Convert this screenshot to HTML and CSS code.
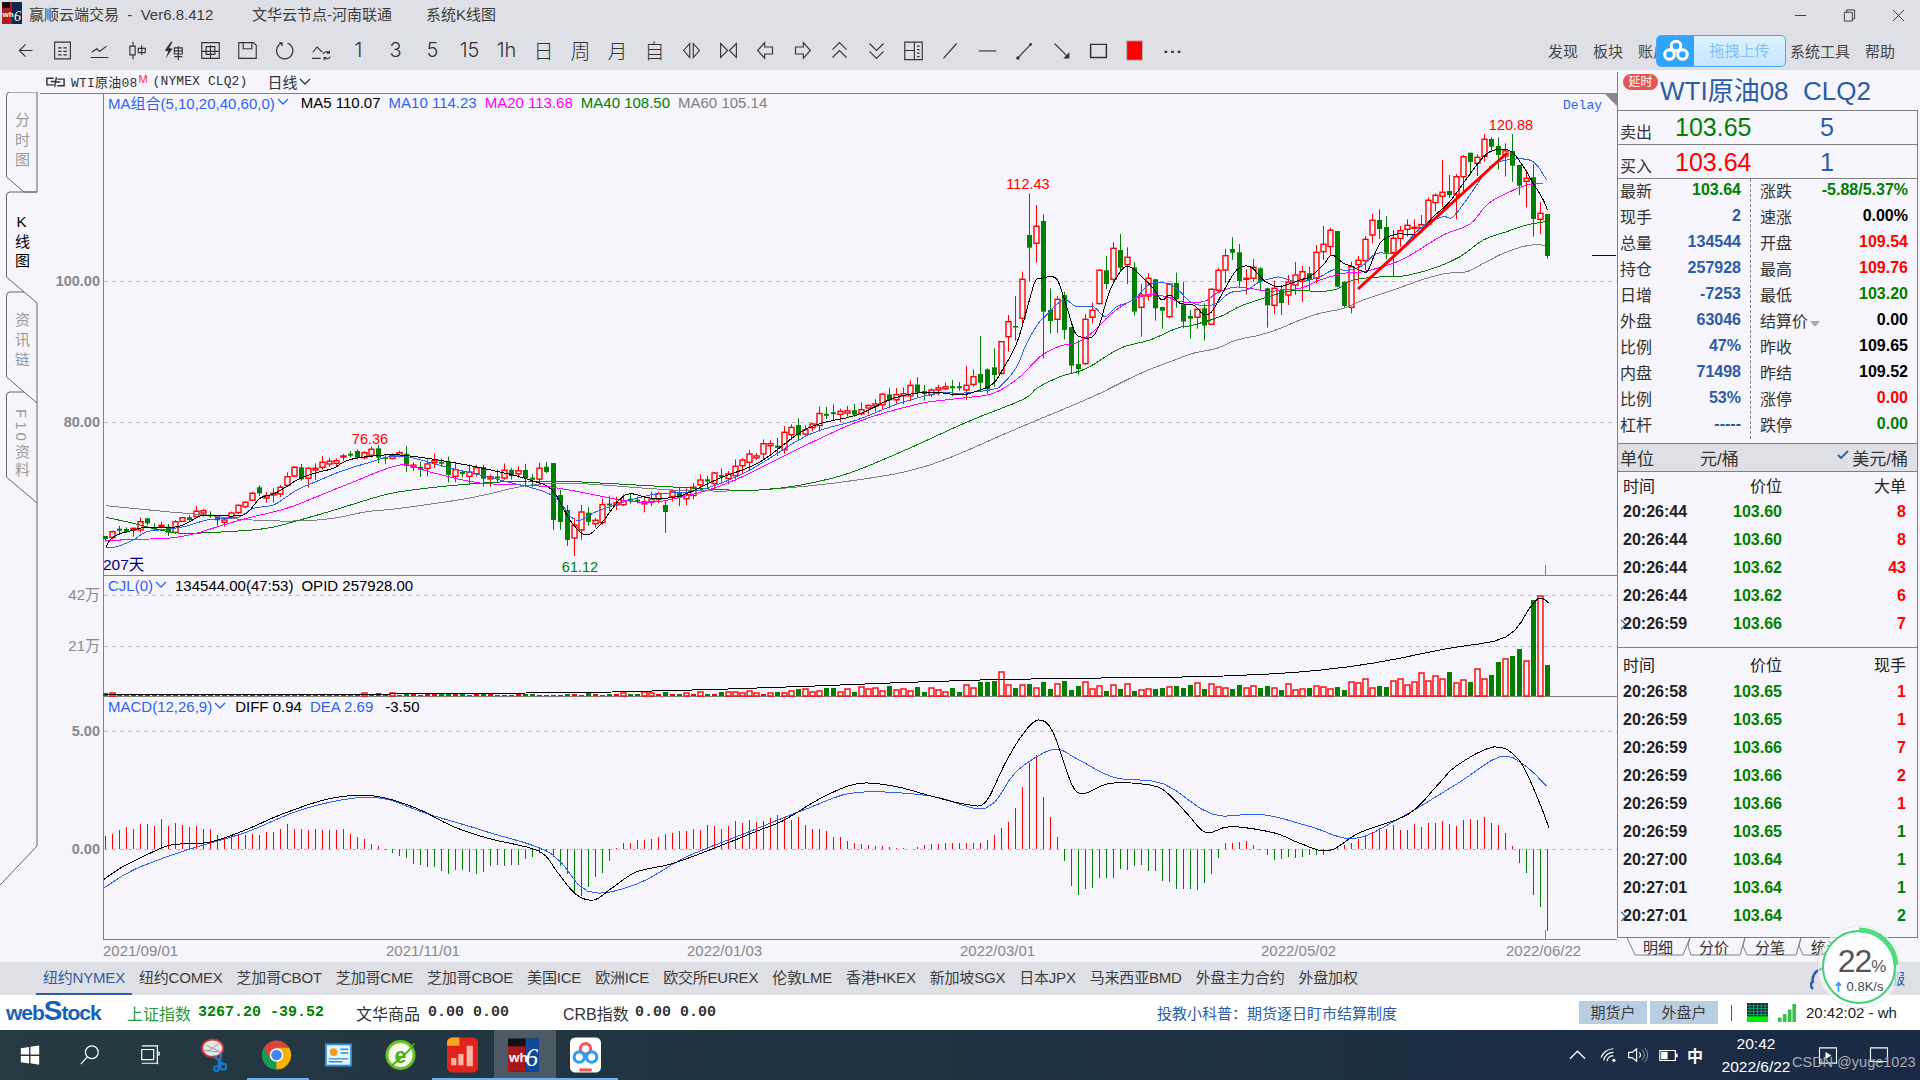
FILE: index.html
```html
<!DOCTYPE html>
<html lang="zh">
<head>
<meta charset="utf-8">
<title>赢顺云端交易</title>
<link rel="stylesheet" href="styles.css">
</head>
<body>
<div class="app">
  <header class="titlebar">
    <svg class="applogo" viewBox="0 0 20 22">
      <rect width="10" height="22" fill="#b01c1c"/><rect x="10" width="10" height="22" fill="#14284e"/><rect width="8" height="6" fill="#111"/>
      <text x="0.5" y="15" class="applogo-t">wh</text><text x="12" y="19" class="applogo-six">6</text>
    </svg>
    <span class="t-a">赢顺云端交易&nbsp; -&nbsp; Ver6.8.412</span>
    <span class="t-b">文华云节点-河南联通</span>
    <span class="t-c">系统K线图</span>
    <div class="winctl">
      <svg viewBox="0 0 14 14"><path d="M1 7h12"/></svg>
      <svg viewBox="0 0 14 14"><path d="M1.5 3.5h8.500v9.500h-8.500zM4 3.500V1h8.500v9.500H10"/></svg>
      <svg viewBox="0 0 14 14"><path d="M1 1l12 12M13 1L1 13"/></svg>
    </div>
  </header>

  <nav class="toolbar">
    <span class="tb"><svg viewBox="0 0 24 24"><path d="M20 12H5M12 5l-7 7 7 7"/></svg></span>
    <span class="tb"><svg viewBox="0 0 24 24"><path d="M3 2.500h18v19H3zM7 9h4M13 9h4M7 13h4M13 13h4M7 17h4M13 17h4"/></svg></span>
    <span class="tb"><svg viewBox="0 0 24 24"><path d="M2 20h20M3 14l6-4 3 3 8-6"/></svg></span>
    <span class="tb"><svg viewBox="0 0 24 24"><path d="M8 2v5M8 17v5M4.500 7h6v10h-6zM18 6v11M14 9.500h8v5h-8z"/></svg></span>
    <span class="tb"><svg viewBox="0 0 24 24"><path class="solid" d="M9 2L2 12l4 1-3 8 8-11-4-1 4-7z"/><path d="M13 9h9v7h-9zM13 12.500h9M17.500 7v16M13 19h9"/></svg></span>
    <span class="tb"><svg viewBox="0 0 24 24"><path d="M2 3h20v18H2zM2 13h20M12 6v15M7 7.500h10v9H7z"/></svg></span>
    <span class="tb"><svg viewBox="0 0 24 24"><path d="M2 3h17l3 3v15H2zM7 3v7h10V3M6 21v-1"/></svg></span>
    <span class="tb"><svg viewBox="0 0 24 24"><path d="M9 3.500a9.300 9.300 0 1 0 6.500 0M6 3l3.500.500-.500 3.500"/></svg></span>
    <span class="tb"><svg viewBox="0 0 24 24"><path d="M1 21h10M2 14l5-6 6 6M14 16a4 4 0 0 1 7-1M22 19a4 4 0 0 1-7 1M21 12v3h-3M15 23v-3h3"/></svg></span>
    <span class="tb tb-t">1</span>
    <span class="tb tb-t">3</span>
    <span class="tb tb-t">5</span>
    <span class="tb tb-t">15</span>
    <span class="tb tb-t">1h</span>
    <span class="tb tb-t">日</span>
    <span class="tb tb-t">周</span>
    <span class="tb tb-t">月</span>
    <span class="tb tb-t">自</span>
    <span class="tb"><svg viewBox="0 0 24 24"><path d="M10 4L3 12l7 8zM14 4l7 8-7 8z"/></svg></span>
    <span class="tb"><svg viewBox="0 0 24 24"><path d="M3 4l8 8-8 8zM21 4l-8 8 8 8z"/></svg></span>
    <span class="tb"><svg viewBox="0 0 24 24"><path d="M11 3l-8 9 8 9v-5h9V8h-9z"/></svg></span>
    <span class="tb"><svg viewBox="0 0 24 24"><path d="M13 3l8 9-8 9v-5H4V8h9z"/></svg></span>
    <span class="tb"><svg viewBox="0 0 24 24"><path d="M4 11l8-8 8 8M4 20l8-8 8 8"/></svg></span>
    <span class="tb"><svg viewBox="0 0 24 24"><path d="M4 4l8 8 8-8M4 13l8 8 8-8"/></svg></span>
    <span class="tb"><svg viewBox="0 0 24 24"><path d="M2 2.500h20v20H2zM13 2.500v20M2 12h11M16 7h3M16 11h3M16 15h3M16 19h3"/></svg></span>
    <span class="tb"><svg viewBox="0 0 24 24"><path d="M4 21L19 4"/></svg></span>
    <span class="tb"><svg viewBox="0 0 24 24"><path d="M2 12.500h20"/></svg></span>
    <span class="tb"><svg viewBox="0 0 24 24"><path d="M4 21L19 5"/><circle class="solid" cx="4.500" cy="20.500" r="2"/><circle class="solid" cx="19" cy="5" r="1.500"/></svg></span>
    <span class="tb"><svg viewBox="0 0 24 24"><path d="M4 4l15 15"/><path class="solid" d="M21 14v7h-7z"/></svg></span>
    <span class="tb"><svg viewBox="0 0 24 24"><path class="thick" d="M3 5h18v15H3z"/></svg></span>
    <span class="tb"><svg viewBox="0 0 24 24"><rect class="redbox" x="2" y="1" width="18" height="22"/></svg></span>
    <span class="tb"><svg viewBox="0 0 24 24"><path class="dots" d="M3 13.500h3M10.500 13.500h3M18 13.500h3"/></svg></span>
    <div class="tbmenu">
      <span>发现</span><span>板块</span><span>账户</span><span class="tbsys">系统工具</span><span>帮助</span>
    </div>
    <div class="uploader">
      <span class="up-ic"><svg viewBox="0 0 28 24"><circle cx="14" cy="7" r="4.800"/><circle cx="7.500" cy="15.500" r="4.800"/><circle cx="20.500" cy="15.500" r="4.800"/></svg></span>
      <span class="up-t">拖拽上传</span>
    </div>
  </nav>

  <main class="workspace">
    <section class="leftcol">
      <div class="subhead">
        <svg class="linkic" viewBox="0 0 22 12"><path d="M9 2H2v7h7M13 3h7v7h-7M6 5.500h5M11 6h5M12 1L10 11"/></svg>
        <span class="sym">WTI原油08</span><sup class="sym-m">M</sup><span class="sym sym2">(NYMEX CLQ2)</span>
        <span class="period">日线</span>
        <svg class="chev chev-d" viewBox="0 0 12 8"><path d="M1 1l5 5 5-5"/></svg>
      </div>
      <div class="chartrow">
        <div class="sidetabs">
          <svg class="sideoutline" viewBox="0 92 40 800">
            <path d="M24 192H37V92H10Q6.500 92 6.500 96V177L24 192"/>
            <path d="M37 192H10Q6.500 192 6.500 196V277L37 303"/>
            <path d="M24 292H10Q6.500 292 6.500 296V377L37 403"/>
            <path d="M24 392H10Q6.500 392 6.500 396V477L37 503"/>
            <path d="M37 303V846L0 885"/>
          </svg>
          <div class="stab">分时图</div>
          <div class="stab stab-on">K线图</div>
          <div class="stab">资讯链</div>
          <div class="stab stab-f10">F10资料</div>
        </div>
        <div class="charts">
          <svg id="chart" class="chart" viewBox="40 93 1577 869"></svg>
          <div class="legend lg1">
            <span class="c-blue">MA组合(5,10,20,40,60,0)</span><svg class="chev chev-b" viewBox="0 0 12 8"><path d="M1 1l5 5 5-5"/></svg>
            <span class="c-blk lgm">MA5 110.07</span><span class="c-blue">MA10 114.23</span><span class="c-mag">MA20 113.68</span><span class="c-grn">MA40 108.50</span><span class="c-gry">MA60 105.14</span>
          </div>
          <div class="legend lg2">
            <span class="c-blue">CJL(0)</span><svg class="chev chev-b" viewBox="0 0 12 8"><path d="M1 1l5 5 5-5"/></svg>
            <span class="c-blk lgm">134544.00(47:53)</span><span class="c-blk">OPID 257928.00</span>
          </div>
          <div class="legend lg3">
            <span class="c-blue">MACD(12,26,9)</span><svg class="chev chev-b" viewBox="0 0 12 8"><path d="M1 1l5 5 5-5"/></svg>
            <span class="c-blk lgm">DIFF 0.94</span><span class="c-blue">DEA 2.69</span><span class="c-blk lg-l">-3.50</span>
          </div>
          <span class="delay">Delay</span>
          <span class="corner"></span>
        </div>
      </div>
    </section>

    <aside class="panel">
      <div class="p-head"><span class="badge">延时</span><span class="p-title">WTI原油08&nbsp; CLQ2</span></div>
      <div class="p-bid"><span class="lab">卖出</span><span class="big c-grn">103.65</span><span class="big c-pb">5</span></div>
      <div class="p-bid"><span class="lab">买入</span><span class="big c-red">103.64</span><span class="big c-pb">1</span></div>
      <div class="quote">
        <div class="qcol qcol-l">
          <div class="qr"><span>最新</span><b class="c-grn">103.64</b></div>
          <div class="qr"><span>现手</span><b class="c-pb">2</b></div>
          <div class="qr"><span>总量</span><b class="c-pb">134544</b></div>
          <div class="qr"><span>持仓</span><b class="c-pb">257928</b></div>
          <div class="qr"><span>日增</span><b class="c-pb">-7253</b></div>
          <div class="qr"><span>外盘</span><b class="c-pb">63046</b></div>
          <div class="qr"><span>比例</span><b class="c-pb">47%</b></div>
          <div class="qr"><span>内盘</span><b class="c-pb">71498</b></div>
          <div class="qr"><span>比例</span><b class="c-pb">53%</b></div>
          <div class="qr"><span>杠杆</span><b class="c-pb">-----</b></div>
        </div>
        <div class="qcol qcol-r">
          <div class="qr"><span>涨跌</span><b class="c-grn">-5.88/5.37%</b></div>
          <div class="qr"><span>速涨</span><b class="c-blk">0.00%</b></div>
          <div class="qr"><span>开盘</span><b class="c-red">109.54</b></div>
          <div class="qr"><span>最高</span><b class="c-red">109.76</b></div>
          <div class="qr"><span>最低</span><b class="c-grn">103.20</b></div>
          <div class="qr"><span>结算价<i class="tri"></i></span><b class="c-blk">0.00</b></div>
          <div class="qr"><span>昨收</span><b class="c-blk">109.65</b></div>
          <div class="qr"><span>昨结</span><b class="c-blk">109.52</b></div>
          <div class="qr"><span>涨停</span><b class="c-red">0.00</b></div>
          <div class="qr"><span>跌停</span><b class="c-grn">0.00</b></div>
        </div>
      </div>
      <div class="unit"><span>单位</span><span class="unit-a">元/桶</span><svg class="chk" viewBox="0 0 12 10"><path d="M1 5l3 3 7-7"/></svg><span>美元/桶</span></div>
      <div class="tlist tl1">
        <div class="tr th"><span>时间</span><span>价位</span><span>大单</span></div>
        <div class="tr"><b>20:26:44</b><b class="c-grn">103.60</b><b class="c-red">8</b></div>
        <div class="tr"><b>20:26:44</b><b class="c-grn">103.60</b><b class="c-red">8</b></div>
        <div class="tr"><b>20:26:44</b><b class="c-grn">103.62</b><b class="c-red">43</b></div>
        <div class="tr"><b>20:26:44</b><b class="c-grn">103.62</b><b class="c-red">6</b></div>
        <div class="tr tr-cur"><b>20:26:59</b><b class="c-grn">103.66</b><b class="c-red">7</b></div>
      </div>
      <div class="tlist tl2">
        <div class="tr th"><span>时间</span><span>价位</span><span>现手</span></div>
        <div class="tr"><b>20:26:58</b><b class="c-grn">103.65</b><b class="c-red">1</b></div>
        <div class="tr"><b>20:26:59</b><b class="c-grn">103.65</b><b class="c-red">1</b></div>
        <div class="tr"><b>20:26:59</b><b class="c-grn">103.66</b><b class="c-red">7</b></div>
        <div class="tr"><b>20:26:59</b><b class="c-grn">103.66</b><b class="c-red">2</b></div>
        <div class="tr"><b>20:26:59</b><b class="c-grn">103.66</b><b class="c-red">1</b></div>
        <div class="tr"><b>20:26:59</b><b class="c-grn">103.65</b><b class="c-grn">1</b></div>
        <div class="tr"><b>20:27:00</b><b class="c-grn">103.64</b><b class="c-grn">1</b></div>
        <div class="tr"><b>20:27:01</b><b class="c-grn">103.64</b><b class="c-grn">1</b></div>
        <div class="tr tr-cur"><b>20:27:01</b><b class="c-grn">103.64</b><b class="c-grn">2</b></div>
      </div>
      <div class="ptabs">
        <svg class="ptabs-line" viewBox="0 0 303 24"><path d="M0 .5H10L18 18H66L73 .5H128M73 .5L71 9 74 18H123L128 .5H184M128 .5L126 9 130 18H179L184 .5H240M184 .5L182 9 186 18H235L240 .5H300"/></svg>
        <span class="ptab">明细</span><span class="ptab">分价</span><span class="ptab">分笔</span><span class="ptab">统计</span>
      </div>
    </aside>
  </main>

  <div class="mktbar">
    <span class="mk mk-on">纽约NYMEX</span><span class="mk">纽约COMEX</span><span class="mk">芝加哥CBOT</span><span class="mk">芝加哥CME</span><span class="mk">芝加哥CBOE</span><span class="mk">美国ICE</span><span class="mk">欧洲ICE</span><span class="mk">欧交所EUREX</span><span class="mk">伦敦LME</span><span class="mk">香港HKEX</span><span class="mk">新加坡SGX</span><span class="mk">日本JPX</span><span class="mk">马来西亚BMD</span><span class="mk">外盘主力合约</span><span class="mk">外盘加权</span>
    <span class="service"><svg class="headset" viewBox="0 0 30 24"><path d="M3 22a5 5 0 0 1 0-8M3 16a11 11 0 0 1 22-6"/></svg>在线客服</span>
  </div>

  <div class="status">
    <span class="webstock">web<i>S</i>tock</span>
    <span class="st st-1 c-sgrn">上证指数</span><span class="mono c-grn st-2">3267.20 -39.52</span>
    <span class="st st-3">文华商品</span><span class="mono st-4">0.00 0.00</span>
    <span class="st st-5">CRB指数</span><span class="mono st-6">0.00 0.00</span>
    <span class="st st-7 c-pb">投教小科普：期货逐日盯市结算制度</span>
    <span class="acc acc-1">期货户</span><span class="acc acc-2">外盘户</span>
    <i class="redbar"></i>
    <svg class="cpu" viewBox="0 0 22 20"><rect width="22" height="20" fill="#123"/><rect y="14" width="22" height="6" fill="#0e0"/><path d="M0 3h22M0 6h22M0 9h22M0 12h22M3 0v14M7 0v14M11 0v14M15 0v14M19 0v14" class="cpu-g"/></svg>
    <svg class="sig" viewBox="0 0 20 20"><path d="M0 15h4v5H0zM5.500 11h4v9h-4zM11 6h4v14h-4zM16 0h4v20h-4z"/></svg>
    <span class="st st-8">20:42:02 - wh</span>
  </div>

  <footer class="taskbar">
    <span class="task task-a"><svg viewBox="0 0 24 24"><path class="wh" d="M2 4.500l9-1.300V11.500H2zM12.500 3l9.500-1.500v10h-9.500zM2 13h9v8.300l-9-1.300zM12.500 13H22v9.500L12.500 21z"/></svg></span>
    <span class="task task-b"><svg viewBox="0 0 24 24"><circle class="ln" cx="14" cy="9" r="7"/><path class="ln" d="M9 14l-7 8"/></svg></span>
    <span class="task task-c"><svg viewBox="0 0 24 24"><path class="ln" d="M3 2h18M3 6h13v11H3zM3 21h18M20 2v20M20 9h2v3h-2"/></svg></span>
    <span class="task"><svg class="big-ic" viewBox="0 0 32 34"><ellipse cx="13" cy="10" rx="11" ry="9" fill="#e8e8e8" stroke="#c33" stroke-width="2"/><path d="M6 7l14 6M8 13l12-8M3 12l18 2" stroke="#999" fill="none"/><path d="M14 18l10 9M22 16l-3 14" stroke="#1a7cd0" stroke-width="2.500" fill="none"/><circle cx="24" cy="29" r="3" fill="none" stroke="#1a7cd0" stroke-width="2"/><circle cx="17" cy="31" r="2.500" fill="none" stroke="#1a7cd0" stroke-width="2"/></svg></span>
    <span class="task task-u"><svg class="big-ic" viewBox="0 0 32 32"><circle cx="16" cy="16" r="15" fill="#db4437"/><path d="M16 16L3 23.500A15 15 0 0 0 16 31z" fill="#0f9d58"/><path d="M3 23.500A15 15 0 0 1 3 8.500L9 19z" fill="#0f9d58"/><path d="M16 31A15 15 0 0 0 29 8.500H16z" fill="#f4b400"/><circle cx="16" cy="16" r="7" fill="#fff"/><circle cx="16" cy="16" r="5.500" fill="#4285f4"/></svg></span>
    <span class="task"><svg class="big-ic" viewBox="0 0 32 32"><rect x="2" y="4" width="28" height="24" fill="#2d8fd8"/><rect x="4" y="6" width="24" height="20" fill="#e6f3fc"/><circle cx="11" cy="13" r="4" fill="#f0a020"/><path d="M18 10h8M18 14h8M6 20h20M6 23h14" stroke="#2d8fd8" stroke-width="1.500"/></svg></span>
    <span class="task"><svg class="big-ic" viewBox="0 0 32 32"><circle cx="16" cy="16" r="14" fill="#f3fbe8" stroke="#6cc024" stroke-width="3"/><text x="16" y="24" class="ie-e">e</text><path d="M7 27C14 20 25 14 30 4" stroke="#4fae1c" stroke-width="2" fill="none"/></svg></span>
    <span class="task task-u"><svg class="big-ic" viewBox="0 0 30 34"><rect width="30" height="34" rx="5" fill="#e2231a"/><path d="M0 5a5 5 0 0 1 5-5h7v8H0z" fill="#f5a623"/><path d="M4 20h5v7H4zM11 16h5v11h-5zM19 8h6v20h-6z" fill="#ffb4a8"/></svg></span>
    <span class="task task-on task-u"><svg class="big-ic" viewBox="0 0 32 34"><rect width="32" height="34" fill="#111"/><rect x="0" y="8" width="18" height="26" fill="#a81818"/><rect x="18" y="0" width="14" height="34" fill="#14489a"/><text x="1" y="24" class="wh6-t">wh</text><text x="18" y="28" class="wh6-s">6</text></svg></span>
    <span class="task task-u"><svg class="big-ic" viewBox="0 0 30 34"><rect width="30" height="34" rx="5" fill="#fff"/><g fill="none" stroke-width="3"><circle cx="15" cy="11" r="5" stroke="#ef5a5a"/><circle cx="9" cy="19" r="5" stroke="#2a9df4"/><circle cx="21" cy="19" r="5" stroke="#2a9df4"/></g><rect x="9" y="30" width="12" height="3" fill="#e55"/></svg></span>
    <div class="tray">
      <svg class="tr-ic" viewBox="0 0 18 10"><path class="ln" d="M1 9l8-8 8 8"/></svg>
      <svg class="tr-wifi" viewBox="0 0 20 18"><path class="ln" d="M1 12a15 15 0 0 1 14-10M4 15a11 11 0 0 1 11-9M8 16a6 6 0 0 1 7-6"/><circle class="wh" cx="15.500" cy="15" r="1.800"/></svg>
      <svg class="tr-vol" viewBox="0 0 22 18"><path class="ln" d="M1 6h4l5-4v14l-5-4H1zM13 6a4 4 0 0 1 0 6"/><path class="ln-dim" d="M16 3a8 8 0 0 1 0 12M19 1a11 11 0 0 1 0 16"/></svg>
      <svg class="tr-bat" viewBox="0 0 20 12"><path class="ln" d="M.5.500h17v11H.500z"/><rect class="wh" x="2" y="2" width="7" height="8"/><rect class="wh" x="18" y="4" width="2" height="4"/></svg>
      <span class="ime">中</span>
      <div class="clock"><span>20:42</span><span>2022/6/22</span></div>
      <svg class="tr-box" viewBox="0 0 22 20"><path class="ln" d="M1 1h20v18H1z"/><path class="wh" d="M8 6l7 4-7 4z"/></svg>
      <svg class="tr-msg" viewBox="0 0 22 20"><path class="ln" d="M1 1h20v16H1z"/></svg>
    </div>
    <span class="watermark">CSDN @yuge1023</span>
  </footer>

  <div class="speed">
    <svg class="speed-ring" viewBox="0 0 84 84">
      <circle class="sp-o" cx="42" cy="42" r="41"/>
      <circle class="sp-i" cx="42" cy="42" r="36"/>
      <path class="sp-a" d="M42 5A37 37 0 0 1 79 40"/>
    </svg>
    <div class="sp-pct">22<small>%</small></div>
    <div class="sp-net"><svg viewBox="0 0 8 12"><path d="M4 0l4 5H5v7H3V5H0z"/></svg>0.8K/s</div>
  </div>
</div>
<script src="script.js"></script>
</body>
</html>
```
FILE: styles.css
```css
* { box-sizing: border-box; }
html, body { margin: 0; padding: 0; background: #dfe0e5; }
body { font-family: "Liberation Sans", "Noto Sans CJK SC", sans-serif; color: #333; overflow: hidden; }
.app { position: relative; width: 1920px; height: 1080px; display: flex; flex-direction: column; overflow: hidden; }

.c-blue { color: #2f62f0; } .c-blk { color: #000; } .c-mag { color: #ff00ff; } .c-grn { color: #007f00; }
.c-gry { color: #7f7f7f; } .c-red { color: #ff0000; } .c-pb { color: #2d5ca6; } .c-sgrn { color: #2e9a3a; }

.titlebar { height: 30px; display: flex; align-items: center; padding-bottom: 4px; font-size: 15px; color: #3c3c3c; background: #dfe0e5; position: relative; }
.applogo { width: 20px; height: 22px; margin-left: 2px; }
.applogo-t { font: bold 8px "Liberation Sans", sans-serif; fill: #fff; }
.applogo-six { font: italic 14px "Liberation Serif", serif; fill: #fff; }
.t-a { margin-left: 7px; width: 223px; }
.t-b { width: 174px; }
.winctl { margin-left: auto; margin-top: 4px; display: flex; gap: 36px; padding-right: 15px; }
.winctl svg { width: 13px; height: 13px; fill: none; stroke: #333; stroke-width: 1; }

.toolbar { height: 40px; display: flex; align-items: center; padding-left: 7px; background: #dfe0e5; position: relative; }
.tb { width: 37px; height: 40px; display: flex; align-items: center; justify-content: center; flex: none; }
.tb svg { width: 21px; height: 21px; fill: none; stroke: #333; stroke-width: 1.300; }
.tb .solid { fill: #333; stroke: none; }
.tb .thick { stroke-width: 1.700; }
.tb .redbox { fill: #ff0000; stroke: #b5b5b5; stroke-width: 1; }
.tb .dots { stroke-width: 2.500; }
.tb-t { font: 300 20px "Inter", "Noto Sans CJK SC", sans-serif; color: #333; }
.tbmenu { margin-left: auto; display: flex; gap: 15px; padding-right: 25px; font-size: 15px; color: #444; }
.tbsys { margin-left: 107px; }
.uploader { position: absolute; left: 1656px; top: 5px; width: 130px; height: 32px; display: flex; border: 1px solid #4aa8f5; border-radius: 5px; overflow: hidden; background: linear-gradient(#dff2ff, #c5e6ff); }
.up-ic { width: 37px; background: #2ea4fb; display: flex; align-items: center; justify-content: center; }
.up-ic svg { width: 28px; height: 24px; fill: none; stroke: #fff; stroke-width: 3; }
.up-t { flex: 1; text-align: center; line-height: 30px; font-size: 15px; color: #7cc4f8; }

.workspace { height: 892px; display: flex; background: #f5f5fb; }
.leftcol { width: 1617px; display: flex; flex-direction: column; }
.subhead { height: 23px; display: flex; align-items: center; padding-left: 45px; color: #333; }
.linkic { width: 21px; height: 12px; fill: none; stroke: #333; stroke-width: 1.500; margin-right: 5px; }
.sym { font: 13px "Liberation Mono", "Noto Sans CJK SC", monospace; letter-spacing: .2px; }
.sym-m { font-size: 11px; color: #ff3030; margin: -6px 5px 0 1px; }
.sym2 { letter-spacing: .1px; }
.period { margin-left: 20px; font-size: 15px; }
.chev { fill: none; stroke-width: 1.300; flex: none; }
.chev-d { width: 12px; height: 8px; stroke: #333; margin-left: 2px; }
.chev-b { width: 12px; height: 8px; stroke: #2f62f0; margin-left: 2px; }

.chartrow { flex: 1; display: flex; min-height: 0; }
.sidetabs { width: 40px; position: relative; display: flex; flex-direction: column; }
.sideoutline { position: absolute; left: 0; top: -1px; width: 40px; height: 800px; fill: none; stroke: #666; stroke-width: 1; }
.stab { height: 100px; width: 37px; padding-left: 6px; display: flex; align-items: center; justify-content: center; writing-mode: vertical-rl; text-orientation: upright; letter-spacing: 5px; font-size: 15px; color: #9a9a9a; position: relative; margin-top: 0; }
.stab:first-of-type { margin-top: -1px; }
.stab-on { color: #000; letter-spacing: 4px; }
.stab-f10 { text-orientation: mixed; height: 110px; letter-spacing: 3px; margin-top: -3px; }

.charts { flex: 1; position: relative; min-width: 0; }
.chart { display: block; width: 1577px; height: 869px; }
.legend { position: absolute; left: 68px; height: 22px; display: flex; align-items: center; font-size: 15px; gap: 8px; white-space: nowrap; }
.legend .chev { margin-left: -6px; }
.legend .lgm { margin-left: 4px; }
.lg1 { top: -2px; } .lg2 { top: 481px; } .lg3 { top: 602px; }
.lg2 .lgm { margin-left: 0; }
.lg3 .lgm { margin-left: 1px; }
.lg3 .lg-l { margin-left: 4px; }
.delay { position: absolute; left: 1523px; top: 5px; font: 13px "Liberation Mono", monospace; color: #2f62f0; }
.corner { position: absolute; right: 0; top: 0; width: 0; height: 0; border-top: 13px solid #888; border-left: 13px solid transparent; }

.gl { stroke: #bdbdbd; stroke-dasharray: 4 4; stroke-width: 1; shape-rendering: crispEdges; }
.fr { stroke: #808080; stroke-width: 1; shape-rendering: crispEdges; }
.ln-k, .ln-b, .ln-m, .ln-g, .ln-y { fill: none; stroke-width: 1; shape-rendering: crispEdges; }
.ln-k { stroke: #000; }
.ln-b { stroke: #2f62f0; }
.ln-m { stroke: #ff00ff; }
.ln-g { stroke: #007f00; }
.ln-y { stroke: #808080; }
.ln-tr { fill: none; stroke: #ff0000; stroke-width: 3; }
.ln-nv { stroke: #000080; stroke-width: 1; shape-rendering: crispEdges; }
.wk-r { fill: #ff0000; } .wk-g { fill: #007f00; }
.bd-r { fill: #f5f5fb; stroke: #ff0000; stroke-width: 1.400; }
.bd-g { fill: #007f00; }
.ax-b { font: bold 14.500px "Liberation Sans", sans-serif; fill: #888; text-anchor: end; }
.ax-n { font: 15px "Liberation Sans", "Noto Sans CJK SC", sans-serif; fill: #888; text-anchor: end; }
.ax-d { font: 15px "Liberation Sans", sans-serif; fill: #888; }
.pk-r { font: 14.500px "Liberation Sans", sans-serif; fill: #ff0000; text-anchor: middle; }
.pk-g { font: 14.500px "Liberation Sans", sans-serif; fill: #007f00; text-anchor: middle; }
.days { font: 15.500px "Liberation Sans", "Noto Sans CJK SC", sans-serif; fill: #000080; }

.panel { width: 303px; display: flex; flex-direction: column; font-size: 16px; color: #333; }
.panel > * { border-left: 1px solid #808080; border-right: 1px solid #808080; margin-right: 2px; }
.p-head { height: 39px; display: flex; align-items: center; position: relative; border-bottom: 1px solid #808080; margin-top: 2px; padding-left: 5px; border-right: 0; }
.badge { width: 35px; height: 16px; border-radius: 8px; background: #e85454; color: #fff; font-size: 12px; line-height: 16px; text-align: center; margin: -18px 2px 0 0; flex: none; }
.p-title { font-size: 26px; color: #2d5ca6; white-space: nowrap; line-height: 36px; }
.p-bid { height: 34px; display: flex; align-items: center; border-bottom: 1px solid #808080; padding-left: 2px; position: relative; }
.lab { width: 55px; padding-top: 7px; }
.big { font-size: 25px; }
.p-bid + .p-bid .big { padding-top: 2px; }
.big:nth-child(2) { width: 145px; }
.quote { height: 264px; display: flex; padding-bottom: 4px; }
.qcol { display: flex; flex-direction: column; }
.qcol-l { width: 132px; padding: 0 9px 0 2px; }
.qcol-r { flex: 1; padding: 0 9px 0 9px; border-left: 1px dashed #808080; }
.qr { height: 26px; display: flex; justify-content: space-between; align-items: center; white-space: nowrap; position: relative; top: -2px; }
.qr b { font-size: 16px; }
.tri { display: inline-block; width: 0; height: 0; border: 5px solid transparent; border-top: 6px solid #aaa; border-bottom: 0; margin-left: 2px; }
.unit { height: 29px; background: #dfe0e5; border-top: 1px solid #808080; border-bottom: 1px solid #808080; display: flex; align-items: center; padding: 0 9px 0 2px; font-size: 17px; }
.unit-a { margin-left: 46px; }
.chk { width: 12px; height: 10px; fill: none; stroke: #2d5ca6; stroke-width: 1.800; margin: -4px 3px 0 auto; }
.tlist { display: flex; flex-direction: column; }
.tl1 { height: 177px; border-bottom: 1px solid #808080; }
.tl2 { height: 291px; border-bottom: 1px solid #808080; }
.tr { height: 28px; display: grid; grid-template-columns: 5px 64px 95px 1fr; align-items: center; padding: 0 11px 0 0; flex: none; position: relative; color: #222; white-space: nowrap; }
.tr::before { content: ""; }
.tr b { font-size: 16px; }
.tr > :nth-child(1) { color: #222; }
.tr > :nth-child(2) { justify-self: end; }
.tr > :nth-child(3) { justify-self: end; }
.th { height: 26px; }
.tl2 .th { height: 30px; padding-top: 1px; }
.tr-cur::after { content: ""; position: absolute; left: 0; top: 11px; width: 6px; height: 6px; border-top: 1px solid #1f4f9c; border-right: 1px solid #1f4f9c; transform: rotate(45deg); }
.panel > .ptabs { height: 24px; position: relative; border: 0; margin: 0; display: flex; padding-left: 13px; }
.ptabs-line { position: absolute; left: 0; top: -1px; width: 303px; height: 24px; fill: none; stroke: #808080; stroke-width: 1; }
.ptab { width: 56px; text-align: center; font-size: 15px; line-height: 19px; position: relative; color: #333; }

.mktbar { height: 33px; display: flex; align-items: stretch; padding-left: 36px; background: #dfe0e5; font-size: 15px; color: #3c3c3c; position: relative; }
.mk { padding: 0 7px; line-height: 31px; white-space: nowrap; letter-spacing: -.2px; }
.mk-on { color: #2d5ca6; border-bottom: 2px solid #2d5ca6; }
.service { margin-left: auto; margin-right: 15px; color: #2d5ca6; line-height: 31px; display: flex; align-items: center; white-space: nowrap; }
.headset { width: 30px; height: 24px; fill: none; stroke: #2d5ca6; stroke-width: 2.500; margin-right: 5px; }

.status { height: 35px; background: #fff; display: flex; align-items: center; font-size: 15px; white-space: nowrap; color: #333; }
.webstock { margin-left: 6px; width: 121px; font: bold 21px "Liberation Sans", sans-serif; letter-spacing: -1px; color: #1760b8; }
.webstock i { font-style: normal; font-size: 28px; line-height: 20px; }
.mono { font: bold 15px "Liberation Mono", monospace; color: #333; }
.mono.c-grn { color: #007f00; }
.st-1, .st-3, .st-5 { font-size: 16px; }
.st-1 { width: 71px; }
.st-2 { width: 158px; }
.st-3 { width: 72px; }
.st-4 { width: 135px; }
.st-5 { width: 72px; }
.st-6 { width: 522px; }
.st-7 { width: 422px; }
.acc { width: 68px; height: 23px; line-height: 23px; text-align: center; background: #b9cde2; color: #3c3c3c; }
.acc-2 { margin-left: 3px; }
.redbar { width: 1px; height: 16px; background: #e02020; margin-left: 13px; }
.cpu { width: 21px; height: 19px; margin-left: 15px; }
.cpu-g { stroke: #0a6; stroke-width: 1; }
.sig { width: 20px; height: 18px; margin-left: 9px; fill: #35c24a; }
.st-8 { margin-left: 9px; color: #222; }

.taskbar { height: 50px; background: linear-gradient(90deg, #263a43, #1f3240 50%, #1a2a46); display: flex; align-items: stretch; position: relative; color: #fff; }
.task { width: 61.750px; display: flex; align-items: center; justify-content: center; position: relative; flex: none; }
.task svg { width: 22px; height: 22px; }
.task svg.big-ic { width: 31px; height: 36px; margin-right: 2px; }
.task-a { padding-right: 2px; }
.task-b { padding-right: 5px; }
.task-c { padding-right: 8px; }
.task-on { background: #4b5a64; }
.task-u::after { content: ""; position: absolute; left: 0; right: 0; bottom: 0; height: 2px; background: #6fb0e8; }
.taskbar .wh { fill: #fff; stroke: none; }
.taskbar .ln { fill: none; stroke: #fff; stroke-width: 1.300; }
.taskbar .ln-dim { fill: none; stroke: #9aa4ae; stroke-width: 1; }
.ie-e { font: bold 22px "Liberation Sans", sans-serif; fill: #4fae1c; text-anchor: middle; }
.wh6-t { font: bold 14px "Liberation Sans", sans-serif; fill: #fff; }
.wh6-s { font: italic 26px "Liberation Serif", serif; fill: #fff; }
.tray { margin-left: auto; display: flex; align-items: center; padding-right: 31px; }
.tr-ic { width: 17px; height: 10px; margin-right: 14px; }
.tr-wifi { width: 18px; height: 16px; margin-right: 9px; }
.tr-vol { width: 21px; height: 16px; margin-right: 11px; }
.tr-bat { width: 19px; height: 11px; margin-right: 6px; }
.ime { font-size: 16px; font-weight: bold; width: 22px; text-align: center; }
.clock { width: 104px; margin-left: -2px; display: flex; flex-direction: column; align-items: center; font-size: 15.500px; line-height: 23px; }
.tr-box { width: 20px; height: 17px; margin-left: 10px; }
.tr-msg { width: 20px; height: 17px; margin-left: 31px; }
.watermark { position: absolute; left: 1792px; top: 24px; font-size: 14.500px; color: #a9adb2; white-space: nowrap; }

.speed { position: absolute; left: 1817px; top: 925px; width: 84px; height: 84px; }
.speed-ring { width: 84px; height: 84px; display: block; }
.sp-o { fill: rgba(255,255,255,.55); stroke: #e6e6ea; stroke-width: 1; }
.sp-i { fill: #fff; stroke: #3fd178; stroke-width: 2; }
.sp-a { fill: none; stroke: #4fdc80; stroke-width: 5; }
.sp-pct { position: absolute; left: 0; right: 0; top: 18px; text-align: center; font-size: 32px; line-height: 36px; color: #555; letter-spacing: -1px; padding-left: 6px; }
.sp-pct small { font-size: 17px; font-weight: normal; letter-spacing: 0; }
.sp-net { position: absolute; left: 0; right: 0; top: 54px; display: flex; justify-content: center; align-items: center; gap: 5px; font-size: 13px; color: #444; }
.sp-net svg { width: 7px; height: 11px; fill: #3a9df0; }
```
FILE: script.js
```js
(function () {
  var R = 'r', G = 'g';
  // candles as [colour, high, bodyTop, bodyBottom, low] read in local units of each chart stretch
  var A = [[G,288,288,297,305],[R,272,275,292,298],[G,258,266,272,285],[G,262,267,276,280],[R,263,265,270,290],[R,232,245,270,278],[G,235,235,250,255],[G,250,261,268,273],[R,246,256,259,265],[G,252,260,278,288],[R,240,245,277,282],[R,233,233,244,245],[G,225,232,240,246],[R,198,214,230,232],[R,207,212,219,230],[G,214,224,226,234],[G,228,228,241,258],[R,236,240,247,260],[R,215,219,233,236],[R,194,196,218,222],[R,184,187,200,205],[R,155,160,181,183],[G,136,142,160,168],[R,155,167,174,188],[R,145,160,165,188],[R,135,142,162,172],[R,97,110,136,140],[R,78,82,108,112],[G,72,82,118,122],[R,82,85,115,143],[R,70,85,90,120],[R,48,67,82,90],[R,55,64,72,80],[R,55,62,70,80],[R,42,48,51,62],[G,33,41,47,52],[G,28,33,53,58],[R,33,38,53,58],[R,20,28,46,52],[G,15,25,53,70],[G,45,52,54,72],[R,40,47,55,58],[R,32,38,48,52]];
  var B = [[R,618,676,690,720],[R,628,650,673,680],[G,528,642,668,695],[G,625,628,688,700],[G,565,622,645,680],[R,545,545,640,645],[R,465,485,530,575],[G,408,498,502,542],[R,335,358,475,490],[G,100,225,263,365],[R,135,199,250,308],[G,163,183,455,596],[G,385,450,483,520],[R,408,418,478,518],[G,395,405,510,538],[G,500,502,617,642],[G,540,612,627,644],[R,462,478,611,615],[R,428,451,472,490],[R,328,331,431,433],[G,288,331,372,388],[R,247,265,358,368],[G,222,270,323,333],[R,262,292,314,372],[G,307,322,455,467],[R,372,405,442,530],[R,340,355,408,422],[G,358,358,445,482],[G,440,441,452,506],[R,370,372,470,475],[G,338,369,418,443],[G,365,433,485,505],[G,450,468,476,536],[R,445,448,472,506],[G,430,445,497,542],[R,385,388,493,495],[R,323,331,391,400],[R,267,287,330,370],[G,232,267,278,300],[G,252,277,363,380],[R,327,355,358,403],[R,297,322,355,365],[G,322,325,365,390],[G,383,385,436,503],[R,362,385,436,461]];
  var C = [[R,498,515,540,605],[G,500,520,540,570],[R,435,457,535,550],[R,378,433,455,480],[R,384,391,440,465],[G,393,393,560,562],[G,545,545,618,625],[R,485,500,622,640],[R,468,481,494,550],[R,408,418,482,510],[R,342,361,405,430],[G,328,360,387,417],[G,348,381,458,478],[R,390,415,458,528],[R,378,392,415,440],[R,358,376,388,410],[R,358,382,385,408],[R,345,374,384,400],[R,292,301,372,375],[R,280,286,308,333],[R,180,277,289,320],[G,225,273,285,295],[R,222,230,285,357],[R,165,170,230,275],[G,158,158,186,225],[R,163,172,190,228],[R,102,118,169,185],[G,112,117,140,152],[G,112,138,165,208],[R,130,153,168,230],[G,102,153,197,245],[G,195,195,257,285],[R,210,235,244,322],[G,193,232,357,410],[R,307,340,358,402],[G,342,342,468,476]];

  var seed = 20220622;
  function rnd() { seed = (seed * 1664525 + 1013904223) % 4294967296; return seed / 4294967296; }
  function interp(p, x) {
    if (x <= p[0][0]) return p[0][1];
    for (var i = 1; i < p.length; i++) {
      if (x <= p[i][0]) { var t = (x - p[i - 1][0]) / (p[i][0] - p[i - 1][0]); return p[i - 1][1] + t * (p[i][1] - p[i - 1][1]); }
    }
    return p[p.length - 1][1];
  }
  function map(list, fn) { return list.map(function (c) { return [c[0], fn(c[1]), fn(c[2]), fn(c[3]), fn(c[4])]; }); }
  var f12 = function (v) { return 440 + v / 3; };
  var f11 = function (v) { return 160 + v / 3; };
  var f10 = function (v) { return 100 + v / 3; };

  var closeP = [[402,452],[406,462],[430,465],[460,471],[490,475],[520,477],[546,472],[553,520],[560,522],[567,540],[574,527],[581,515],[590,518],[605,507],[620,495],[640,496],[660,498],[680,495],[700,484],[720,472],[747,459],[784,438],[808,422],[833,416],[857,410],[894,392],[930,386],[960,392]];
  var mid = [], i;
  var prev = 452;
  for (i = 43; i <= 122; i++) {
    var x = 105 + 7 * i, cl = interp(closeP, x) + (rnd() - 0.5) * 14;
    var op = prev + (rnd() - 0.5) * 5;
    var top = Math.min(op, cl), bot = Math.max(op, cl);
    if (bot - top < 2) bot = top + 2;
    var hi = top - rnd() * 7 - 1, lo = bot + rnd() * 8 + 1;
    mid.push([cl < op ? R : G, hi, top, bot, lo]);
    prev = cl;
  }
  mid[64 - 43] = [G, 463, 463, 520, 530];
  mid[65 - 43] = [G, 490, 495, 522, 530];
  mid[66 - 43] = [G, 505, 510, 540, 546];
  mid[67 - 43] = [R, 518, 525, 538, 556];
  mid[68 - 43] = [R, 505, 512, 530, 540];
  mid[80 - 43] = [G, 500, 505, 512, 533];

  var candles = map(A, f12).concat(mid, map(B, f11),
    [[G,285,290,303,315],[R,275,282,295,305],[R,262,275,285,295]], map(C, f10));
  var X = function (n) { return 105 + 7 * n; };

  var volP = [[105,2],[400,2],[560,2],[700,3],[820,6],[960,8],[1000,13],[1100,10],[1300,9],[1400,14],[1460,22],[1500,28],[1512,36]];
  var volFix = { 201: 40, 202: 47, 203: 35, 204: 96, 205: 100, 206: 31 };
  var histP = [[104,15],[125,22],[160,28],[200,22],[227,12],[265,18],[290,24],[343,18],[379,3],[386,-2],[430,-20],[465,-25],[520,-14],[545,-1],[552,-6],[580,-48],[606,-20],[618,5],[686,18],[760,30],[790,34],[830,16],[857,5],[912,0],[930,6],[980,6],[1005,24],[1035,90],[1060,0],[1076,-52],[1100,-34],[1140,-14],[1175,-44],[1206,-36],[1224,6],[1248,9],[1274,-12],[1322,-6],[1348,6],[1384,22],[1420,24],[1488,30],[1505,16],[1512,3]];
  var histFix = { 200: 16, 201: 3, 202: -14, 203: -24, 204: -46, 205: -58, 206: -82 };

  var s = [];
  function add(t) { s.push(t); }
  function line(x1, y1, x2, y2, c) { add('<line x1="' + x1 + '" y1="' + y1 + '" x2="' + x2 + '" y2="' + y2 + '" class="' + c + '"/>'); }
  function smooth(p) {
    var out = [], n = p.length;
    for (var k = 0; k < n - 1; k++) {
      var p0 = p[Math.max(k - 1, 0)], p1 = p[k], p2 = p[k + 1], p3 = p[Math.min(k + 2, n - 1)];
      for (var j = 0; j < 4; j++) {
        var t = j / 4, t2 = t * t, t3 = t2 * t;
        out.push([
          0.5 * (2 * p1[0] + (p2[0] - p0[0]) * t + (2 * p0[0] - 5 * p1[0] + 4 * p2[0] - p3[0]) * t2 + (3 * p1[0] - p0[0] - 3 * p2[0] + p3[0]) * t3),
          0.5 * (2 * p1[1] + (p2[1] - p0[1]) * t + (2 * p0[1] - 5 * p1[1] + 4 * p2[1] - p3[1]) * t2 + (3 * p1[1] - p0[1] - 3 * p2[1] + p3[1]) * t3)
        ]);
      }
    }
    out.push(p[n - 1]);
    return out;
  }
  function poly(list, c) { add('<polyline class="' + c + '" points="' + list.map(function (p) { return p[0].toFixed(1) + ',' + p[1].toFixed(1); }).join(' ') + '"/>'); }
  function text(x, y, c, t) { add('<text x="' + x + '" y="' + y + '" class="' + c + '">' + t + '</text>'); }
  function pts(list, fx, fy) { return list.map(function (p) { return [fx(p[0]), fy(p[1])]; }); }
  var x12 = function (v) { return v / 3; }, x11 = function (v) { return 960 + v / 3; }, x10 = function (v) { return 1300 + v / 3; };
  var dsp = function (v) { return v * 1.2245; };
  function ma(a, m, b, c) { return smooth(pts(a, x12, f12).concat(m, pts(b, x11, f11), pts(c, x10, f10))); }

  // grid
  [281, 422, 595, 646, 731, 849].forEach(function (y) { line(104, y + .5, 1617, y + .5, 'gl'); });
  // frame
  line(40, 93.5, 1617, 93.5, 'fr');
  line(103.5, 93, 103.5, 939, 'fr');
  [575, 696, 939].forEach(function (y) { line(103, y + .5, 1617, y + .5, 'fr'); });
  line(1545.5, 565, 1545.5, 575, 'fr');
  line(1545.5, 930, 1545.5, 939, 'fr');

  // axis
  text(100, 286, 'ax-b', '100.00');
  text(100, 427, 'ax-b', '80.00');
  text(100, 600, 'ax-n', '42万');
  text(100, 651, 'ax-n', '21万');
  text(100, 736, 'ax-b', '5.00');
  text(100, 854, 'ax-b', '0.00');
  [[103,'2021/09/01'],[386,'2021/11/01'],[687,'2022/01/03'],[960,'2022/03/01'],[1261,'2022/05/02'],[1506,'2022/06/22']].forEach(function (d) { text(d[0], 956, 'ax-d', d[1]); });

  // candles
  candles.forEach(function (c, n) {
    var x = X(n), w = c[0] === R ? 'wk-r' : 'wk-g';
    add('<rect x="' + x + '" y="' + c[1].toFixed(1) + '" width="1" height="' + (c[4] - c[1]).toFixed(1) + '" class="' + w + '"/>');
    if (c[0] === R) add('<rect x="' + (x - 2) + '" y="' + c[2].toFixed(1) + '" width="5" height="' + Math.max(c[3] - c[2], 1).toFixed(1) + '" class="bd-r"/>');
    else add('<rect x="' + (x - 2) + '" y="' + c[2].toFixed(1) + '" width="5" height="' + Math.max(c[3] - c[2], 1.5).toFixed(1) + '" class="bd-g"/>');
  });

  // moving averages
  poly(ma([[318,197],[500,215],[620,225],[720,238],[880,243],[1000,235],[1100,215],[1200,205]],
    [[470,498],[551,483],[673,490],[759,490],[857,480],[930,465],[1016,429]],
    [[380,718],[450,685],[510,655],[570,628],[630,605],[700,580],[770,565],[830,540],[900,525],[960,505]],
    [[0,660],[60,640],[130,625],[190,600],[280,570],[370,538],[440,520],[500,515],[560,485],[610,460],[680,437],[735,435]]), 'ln-y');
  poly(ma([[318,232],[400,250],[480,270],[550,280],[680,275],[800,265],[900,240],[1020,205],[1100,180],[1200,155]],
    [[470,484],[551,481],[673,487],[759,490],[833,478],[894,455],[967,422]],
    [[190,718],[230,685],[300,650],[380,625],[480,565],[570,540],[650,505],[700,495],[780,470],[850,435],[960,400]],
    [[0,570],[50,575],[110,567],[160,540],[250,530],[310,528],[400,505],[480,470],[550,420],[620,395],[680,375],[735,365]]), 'ln-g');
  poly(ma([[318,303],[400,298],[500,295],[580,282],[660,258],[740,235],[860,205],[950,170],[1050,130],[1200,75]],
    [[430,472],[480,483],[551,487],[637,502],[686,496],[735,480],[796,450],[857,422],[918,404]],
    [[0,715],[100,700],[180,650],[240,590],[300,558],[350,548],[400,515],[450,465],[500,430],[560,405],[620,410],[660,425],[730,425],[770,400],[820,382],[870,385],[930,395],[960,390]],
    [[0,565],[60,540],[130,520],[190,515],[280,490],[340,460],[430,405],[510,372],[560,315],[610,285],[680,255],[740,252]]), 'ln-m');
  poly(ma([[318,322],[350,320],[400,300],[440,275],[500,268],[560,258],[620,240],[680,235],[720,230],[760,205],[820,195],[860,170],[900,145],[960,120],[1020,95],[1100,70],[1200,48]],
    [[450,468],[500,480],[552,495],[575,520],[600,510],[650,495],[700,490],[750,470],[808,435],[857,420],[900,403],[940,393]],
    [[0,700],[100,688],[130,670],[170,620],[200,550],[235,490],[260,465],[300,425],[320,420],[350,440],[400,440],[435,470],[470,440],[520,420],[570,372],[620,370],[660,395],[690,425],[730,437],[770,430],[810,398],[860,390],[900,365],[950,352],[960,352]],
    [[0,545],[60,530],[100,510],[150,510],[190,495],[230,460],[290,458],[340,405],[380,370],[430,350],[460,350],[520,270],[570,200],[620,180],[680,178],[710,195],[740,240]]), 'ln-b');
  poly(ma([[318,322],[340,290],[400,270],[440,262],[520,262],[560,250],[600,228],[640,226],[700,228],[740,220],[780,175],[820,162],[860,140],[900,115],[960,95],[1000,85],[1040,62],[1100,50],[1200,45]],
    [[450,462],[500,472],[530,480],[552,490],[570,520],[585,535],[600,525],[625,495],[650,498],[680,496],[720,478],[760,462],[808,428],[857,415],[894,398],[930,392]],
    [[0,705],[60,690],[100,670],[130,625],[170,550],[200,450],[225,365],[245,355],[275,350],[295,365],[320,440],[340,505],[355,528],[395,532],[420,490],[440,420],[460,370],[500,318],[550,355],[580,385],[605,420],[630,405],[660,430],[700,435],[730,462],[755,455],[790,395],[830,330],[870,320],[910,360],[930,372],[960,380]],
    [[0,540],[30,530],[70,495],[95,465],[130,490],[150,497],[185,513],[205,510],[240,430],[290,402],[350,402],[400,350],[445,310],[490,250],[530,195],[570,155],[625,150],[660,185],[700,250],[730,300],[742,330]]), 'ln-k');

  // drawn trend line and stray price marker
  poly([[1358,289],[1440,214],[1507,153]], 'ln-tr');
  line(1592, 255.5, 1616, 255.5, 'ln-nv');

  // peak labels
  text(1511, 130, 'pk-r', '120.88');
  text(1028, 189, 'pk-r', '112.43');
  text(370, 444, 'pk-r', '76.36');
  text(580, 572, 'pk-g', '61.12');
  text(103, 570, 'days', '207天');

  // volume
  candles.forEach(function (c, n) {
    var x = X(n), h = volFix[n] || Math.max(1, interp(volP, x) * (0.5 + rnd() * 0.9));
    if (x > 995 && x < 1005) h = 24;
    h = Math.round(h);
    if (c[0] === R && h > 2) add('<rect x="' + (x - 2) + '" y="' + (696 - h) + '" width="5" height="' + h + '" class="bd-r"/>');
    else add('<rect x="' + (x - 2) + '" y="' + (696 - h) + '" width="5" height="' + h + '" class="' + (c[0] === R ? 'wk-r' : 'bd-g') + '"/>');
  });
  poly(smooth([[105,695],[612,692],[980,680],[1224,676],[1347,667],[1445,649],[1506,637],[1531,606],[1540,598],[1549,603]]), 'ln-k');

  // MACD histogram
  candles.forEach(function (c, n) {
    var x = X(n);
    var v = (n in histFix) ? histFix[n] : interp(histP, x) * (0.82 + rnd() * 0.3);
    v = Math.round(v);
    if (v === 0) return;
    add('<rect x="' + x + '" y="' + (v > 0 ? 849 - v : 849) + '" width="1" height="' + Math.abs(v) + '" class="' + (v > 0 ? 'wk-r' : 'wk-g') + '"/>');
  });
  var xy = function (p) { return [dsp(p[0]), dsp(p[1])]; };
  poly(smooth([[85,725],[110,710],[150,695],[200,680],[250,660],[305,651],[350,665],[400,680],[450,697],[480,728],[520,722],[560,700],[610,680],[660,660],[700,647],[760,650],[805,660],[830,630],[860,612],[880,620],[910,635],[950,640],[990,665],[1030,665],[1070,675],[1105,685],[1140,670],[1190,640],[1225,618],[1245,625],[1263,642]].map(xy)), 'ln-b');
  poly(smooth([[85,718],[100,708],[120,698],[140,690],[170,688],[200,678],[230,665],[270,652],[305,650],[340,660],[370,675],[400,685],[440,695],[455,712],[470,730],[485,735],[500,725],[520,712],[550,705],[590,690],[620,678],[640,670],[670,652],[700,640],[730,642],[760,650],[790,657],[805,655],[820,625],[835,600],[848,588],[860,598],[875,640],[885,648],[905,640],[930,640],[950,645],[970,665],[985,680],[1005,675],[1040,680],[1060,688],[1085,695],[1110,680],[1150,665],[1175,640],[1190,625],[1220,610],[1240,620],[1255,650],[1265,676]].map(xy)), 'ln-k');

  document.getElementById('chart').innerHTML = s.join('');
})();
```
